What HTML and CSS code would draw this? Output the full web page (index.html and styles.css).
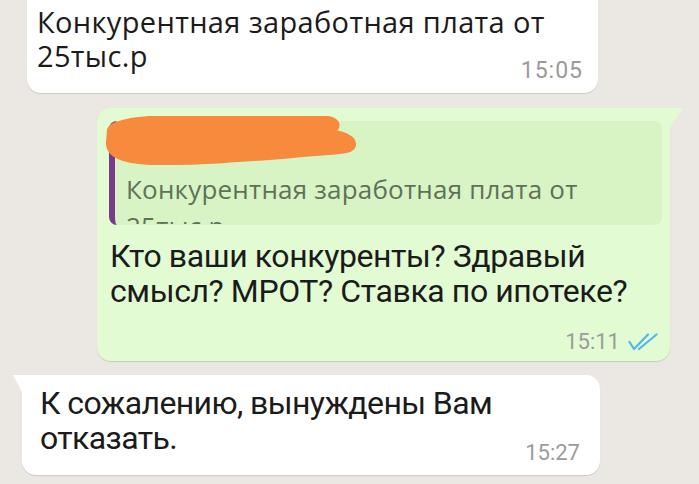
FILE: index.html
```html
<!DOCTYPE html>
<html lang="ru">
<head>
    <meta charset="UTF-8">
    <meta name="viewport" content="width=device-width, initial-scale=1.0">
    <title>Чат</title>
    <link rel="stylesheet" href="styles.css">
</head>
<body>
    <div class="chat">
        <div class="bubble incoming first">
            <div class="text">Конкурентная заработная плата от<br>25тыс.р</div>
            <div class="meta">15:05</div>
        </div>

        <div class="bubble outgoing">
            <div class="quote">
                <svg class="scribble" width="252" height="50" viewBox="0 0 252 50">
                    <path d="M4 14 C 8 2, 60 1, 120 2 C 170 2, 215 0, 226 4 C 234 8, 230 14, 224 16 C 236 18, 248 22, 247 29 C 246 36, 230 35, 210 37 C 160 41, 100 47, 45 46 C 15 45, 2 38, 3 26 Z" fill="#f78a3c" stroke="#f78a3c" stroke-width="6" stroke-linejoin="round"/>
                </svg>
                <div class="quote-text">Конкурентная заработная плата от<br>25тыс.р</div>
            </div>
            <div class="text">Кто ваши конкуренты? Здравый<br>смысл? МРОТ? Ставка по ипотеке?</div>
            <div class="meta">15:11
                <svg class="ticks" width="30" height="18" viewBox="0 0 30 18">
                    <path d="M1.5 9 L6 16 L20 1.5" fill="none" stroke="#4fb8ea" stroke-width="2.2" stroke-linecap="round" stroke-linejoin="round"/>
                    <path d="M11 16 L28.5 1.5" fill="none" stroke="#4fb8ea" stroke-width="2.2" stroke-linecap="round"/>
                </svg>
            </div>
        </div>

        <div class="bubble incoming last">
            <div class="text">К сожалению, вынуждены Вам<br>отказать.</div>
            <div class="meta">15:27</div>
        </div>
    </div>
</body>
</html>
```

FILE: styles.css
```css
body {
    margin: 0;
    width: 699px;
    height: 484px;
    overflow: hidden;
    background-color: #ebe8e3;
    font-family: Roboto, "Noto Sans", sans-serif;
    color: #1b1b1b;
}
.chat {
    display: flex;
    flex-direction: column;
}
.bubble {
    position: relative;
    border-radius: 14px;
    box-shadow: 0 1px 1px rgba(0, 0, 0, 0.13);
    box-sizing: border-box;
}
.incoming {
    background-color: #fff;
}
.outgoing {
    background-color: #e2fbd3;
}
.text {
    font-size: 32px;
    line-height: 35px;
    letter-spacing: -0.6px;
}
.meta {
    display: flex;
    justify-content: flex-end;
    align-items: center;
    gap: 8px;
    font-size: 22px;
    line-height: 22px;
    color: #9b9b9b;
}

/* first message, cut at the top of the screen */
.first {
    margin: -16px 0 0 27px;
    width: 571px;
    height: 109px;
    padding: 21px 15px 0 10px;
}
.first .text {
    font-family: "Open Sans", sans-serif;
    font-size: 29px;
    line-height: 34px;
    letter-spacing: 0.35px;
}
.first .meta {
    margin-top: -13px;
    font-size: 23px;
    letter-spacing: 1px;
}

/* reply */
.outgoing {
    margin: 15px 0 0 97px;
    width: 573px;
    height: 253px;
    padding: 13px 8px 0 12px;
    border-top-right-radius: 0;
}
.outgoing::after {
    content: "";
    position: absolute;
    top: 0;
    right: -13px;
    border-top: 19px solid #e2fbd3;
    border-right: 13px solid transparent;
}
.quote {
    display: flow-root;
    height: 104px;
    background-color: #d8f4c5;
    border-left: 6px solid #7a3a8c;
    border-radius: 8px;
    padding-left: 11px;
    box-sizing: border-box;
}
.scribble {
    display: block;
    margin: -5px 0 0 -20px;
}
.quote-text {
    height: 53px;
    overflow: hidden;
    margin-top: 5px;
    font-family: "Open Sans", sans-serif;
    font-size: 26px;
    line-height: 37px;
    letter-spacing: 0.2px;
    color: #5f7259;
}
.outgoing .text {
    margin: 14px 0 0 1px;
    letter-spacing: -0.4px;
}
.outgoing .meta {
    margin: 22px 4px 0 0;
}

/* last message */
.last {
    margin: 14px 0 0 22px;
    width: 578px;
    height: 100px;
    padding: 11px 20px 0 18px;
    border-top-left-radius: 0;
}
.last::before {
    content: "";
    position: absolute;
    top: 0;
    left: -9px;
    border-top: 17px solid #fff;
    border-left: 9px solid transparent;
}
.last .meta {
    margin-top: -14px;
}
```
